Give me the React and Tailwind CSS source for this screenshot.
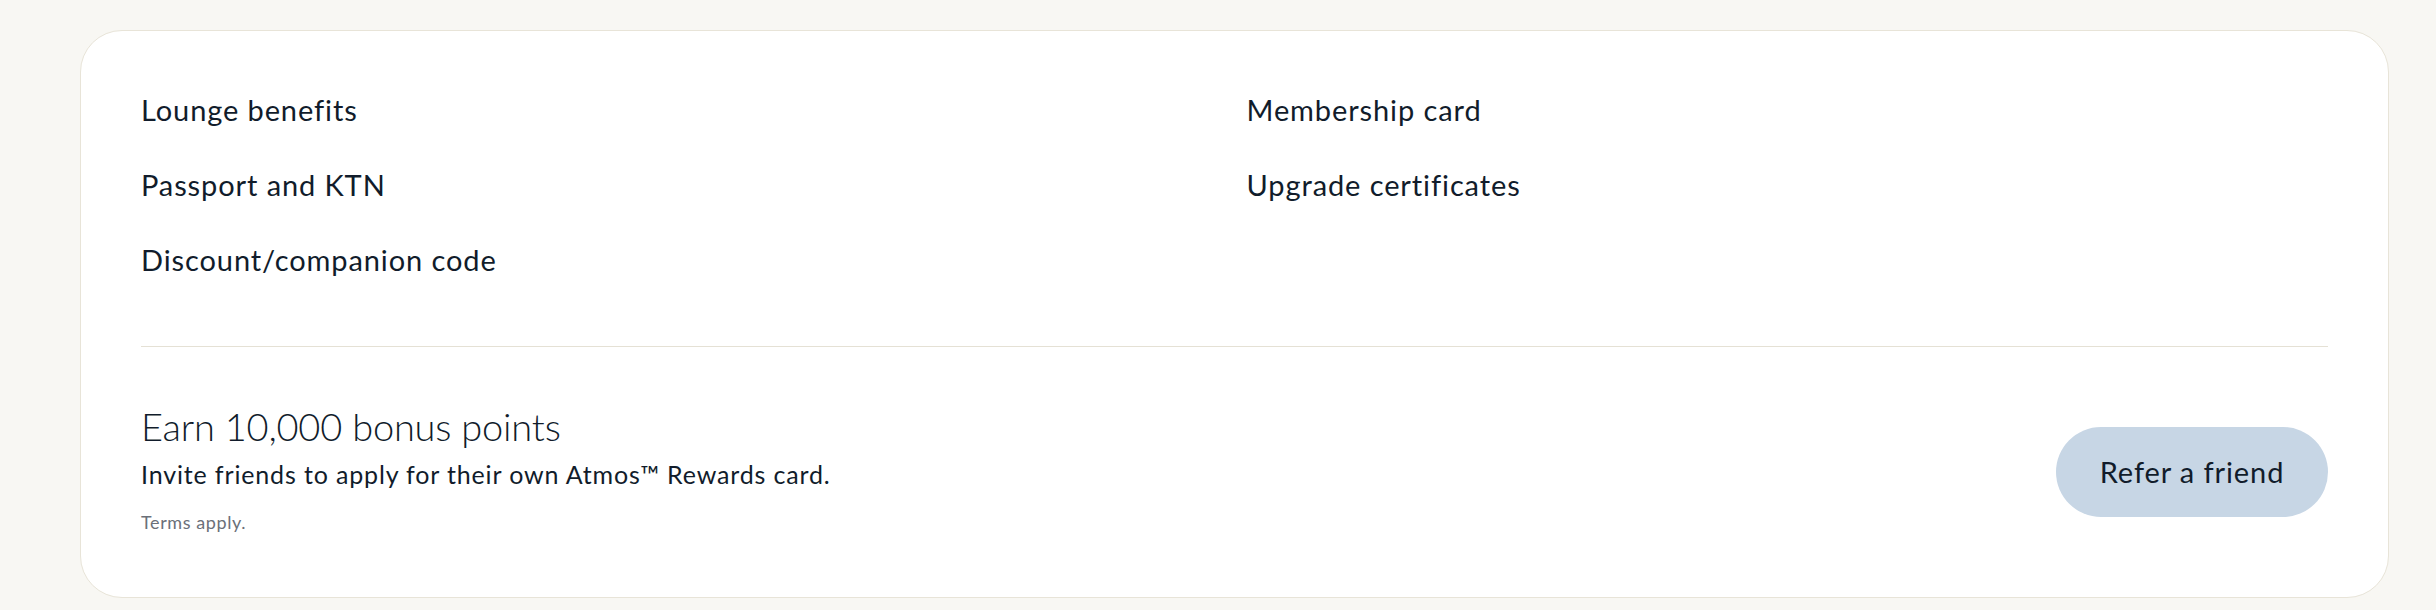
const leftLinks = ['Lounge benefits', 'Passport and KTN', 'Discount/companion code'];
const rightLinks = ['Membership card', 'Upgrade certificates'];

function LinkList({ items }) {
  return (
    <ul className="flex flex-col gap-[39px]">
      {items.map((item) => (
        <li key={item}>
          <a href="#" className="block text-[29px] leading-[36px] tracking-[0.9px] text-[#111c2b] hover:underline">
            {item}
          </a>
        </li>
      ))}
    </ul>
  );
}

export default function App() {
  return (
    <div className="min-h-[610px] bg-[#f8f7f3] pt-[30px] font-['Lato',sans-serif]">
      <div className="ml-[80px] w-[2309px] rounded-[42px] border border-[#e8e4d8] bg-white px-[60px] pt-[61px] pb-[63px]">
        <div className="grid grid-cols-2 gap-6">
          <LinkList items={leftLinks} />
          <LinkList items={rightLinks} />
        </div>

        <div className="mt-[68px] h-px bg-[#e5e1d5]" />

        <div className="mt-[56px] flex items-center justify-between">
          <div>
            <h2 className="text-[38px] font-light leading-[46px] tracking-[-0.2px] text-[#111c2b]">
              Earn 10,000 bonus points
            </h2>
            <p className="mt-[9px] text-[25px] leading-[32px] tracking-[0.85px] text-[#111c2b]">
              Invite friends to apply for their own Atmos™ Rewards card.
            </p>
            <p className="mt-[20px] text-[18px] leading-[24px] tracking-[0.6px] text-[#6b7079]">Terms apply.</p>
          </div>
          <button
            type="button"
            className="mt-[7px] h-[90px] w-[272px] rounded-full bg-[#c7d6e5] text-[29px] tracking-[0.9px] text-[#111c2b]"
          >
            Refer a friend
          </button>
        </div>
      </div>
    </div>
  );
}
